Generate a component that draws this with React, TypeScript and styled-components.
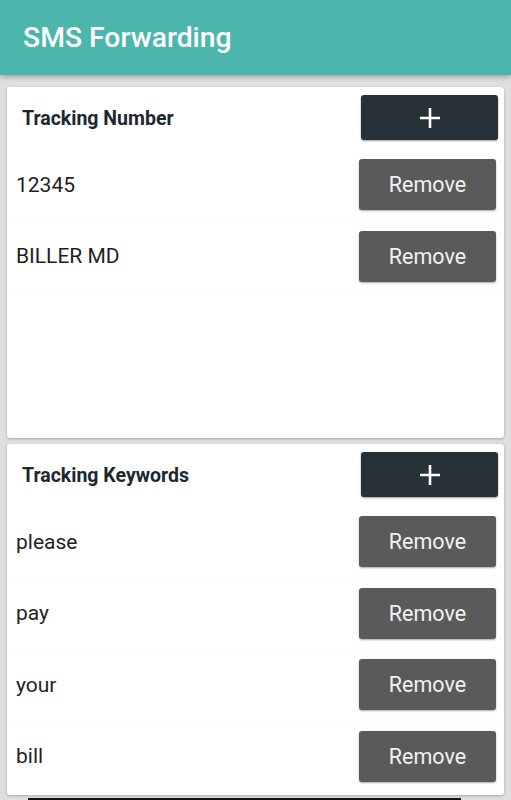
import React from 'react';
import styled, { createGlobalStyle } from 'styled-components';

const GlobalStyle = createGlobalStyle`
  html, body {
    margin: 0;
    padding: 0;
    background: #dfdfdf;
    font-family: Roboto, "Liberation Sans", Arial, sans-serif;
    overflow: hidden;
  }
`;

const Page = styled.div`
  width: 511px;
  height: 800px;
  display: flex;
  flex-direction: column;
  background: #dfdfdf;
  overflow: hidden;
`;

const AppBar = styled.header`
  height: 75px;
  flex-shrink: 0;
  display: flex;
  align-items: center;
  padding-left: 23px;
  background: #4db6ac;
  box-shadow: 0 2px 5px rgba(0, 0, 0, 0.28);
  position: relative;
  z-index: 1;
`;

const AppTitle = styled.h1`
  margin: 0;
  font-size: 28.3px;
  font-weight: 500;
  color: #ffffff;
`;

const Content = styled.main`
  display: flex;
  flex-direction: column;
  flex-shrink: 0;
  gap: 6px;
  padding: 12px 7px 0;
`;

const Card = styled.section`
  height: 351px;
  flex-shrink: 0;
  display: flex;
  flex-direction: column;
  background: #ffffff;
  border-radius: 3px;
  box-shadow: 0 1px 3px rgba(0, 0, 0, 0.25);
  overflow: hidden;
`;

const CardHeader = styled.div`
  height: 63px;
  display: flex;
  align-items: flex-start;
  justify-content: space-between;
  padding: 8px 6px 0 15px;
  box-sizing: border-box;
  flex-shrink: 0;
`;

const CardTitle = styled.h2`
  margin: 0;
  height: 46px;
  display: flex;
  align-items: center;
  font-size: 19.5px;
  font-weight: 700;
  color: #1b2830;
`;

const AddButton = styled.button`
  width: 137px;
  height: 45px;
  display: flex;
  align-items: center;
  justify-content: center;
  padding: 0;
  border: none;
  border-radius: 3px;
  background: #263238;
  box-shadow: 0 1px 2px rgba(0, 0, 0, 0.4);
  cursor: pointer;
`;

const Row = styled.div`
  height: 71.5px;
  display: flex;
  align-items: flex-start;
  justify-content: space-between;
  padding: 9px 7px 0 8px;
  box-sizing: border-box;
  margin: 0 1px;
  border-bottom: 1px solid rgba(0, 0, 0, 0.008);
  flex-shrink: 0;
`;

const RowLabel = styled.span`
  height: 51px;
  display: flex;
  align-items: center;
  font-size: 21px;
  color: #1f1f1f;
`;

const RemoveButton = styled.button`
  width: 137px;
  height: 51px;
  padding: 0;
  border: none;
  border-radius: 3px;
  background: #5a5a5b;
  box-shadow: 0 1px 2px rgba(0, 0, 0, 0.35);
  color: #f2f2f2;
  font-family: Roboto, "Liberation Sans", Arial, sans-serif;
  font-size: 21.5px;
  cursor: pointer;
`;

const BottomBar = styled.div`
  height: 10px;
  margin: -3px 43px 0 21px;
  background: #111111;
  flex-shrink: 0;
`;

const PlusIcon = () => (
  <svg width="22" height="22" viewBox="0 0 22 22">
    <path d="M11 1v20M1 11h20" stroke="#ffffff" strokeWidth="2.6" fill="none" />
  </svg>
);

type ListCardProps = {
  title: string;
  items: string[];
};

const ListCard: React.FC<ListCardProps> = ({ title, items }) => (
  <Card>
    <CardHeader>
      <CardTitle>{title}</CardTitle>
      <AddButton aria-label="Add">
        <PlusIcon />
      </AddButton>
    </CardHeader>
    {items.map((item) => (
      <Row key={item}>
        <RowLabel>{item}</RowLabel>
        <RemoveButton>Remove</RemoveButton>
      </Row>
    ))}
  </Card>
);

export default function App() {
  return (
    <>
      <GlobalStyle />
      <Page>
        <AppBar>
          <AppTitle>SMS Forwarding</AppTitle>
        </AppBar>
        <Content>
          <ListCard title="Tracking Number" items={['12345', 'BILLER MD']} />
          <ListCard title="Tracking Keywords" items={['please', 'pay', 'your', 'bill']} />
          <BottomBar />
        </Content>
      </Page>
    </>
  );
}
